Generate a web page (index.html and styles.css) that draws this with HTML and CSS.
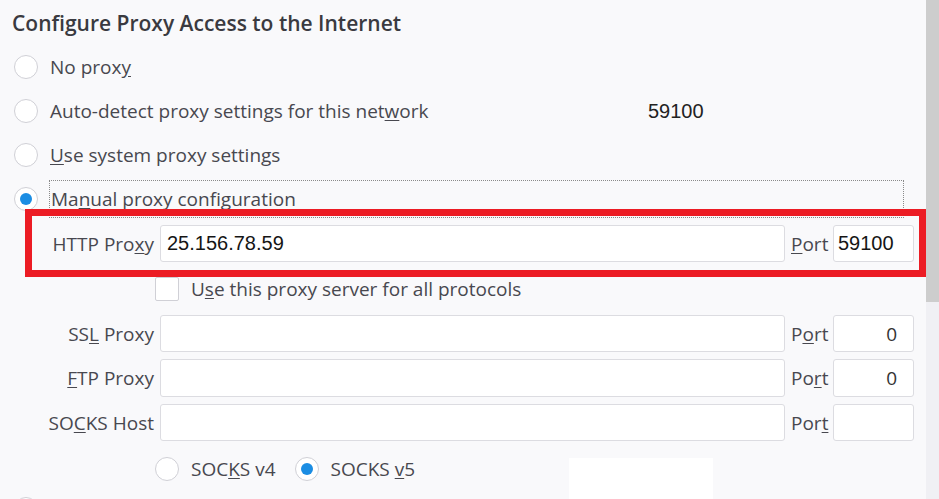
FILE: index.html
```html
<!DOCTYPE html>
<html lang="en">
<head>
<meta charset="utf-8">
<title>Connection Settings</title>
<link rel="stylesheet" href="styles.css">
</head>
<body>
<div class="window">
  <main class="pane">
    <h1 class="title">Configure Proxy Access to the Internet</h1>
    <div class="opt"><span class="radio"></span><span>No prox<u>y</u></span></div>
    <div class="opt"><span class="radio"></span><span class="wide">Auto-detect proxy settings for this net<u>w</u>ork</span><span class="stray">59100</span></div>
    <div class="opt"><span class="radio"></span><span><u>U</u>se system proxy settings</span></div>
    <div class="opt"><span class="radio on"></span><span class="focus">Ma<u>n</u>ual proxy configuration</span></div>

    <div class="proxy-grid">
      <span class="lbl">HTTP Pro<u>x</u>y</span>
      <div class="field host">25.156.78.59</div>
      <span class="plbl"><u>P</u>ort</span>
      <div class="field port typed">59100</div>

      <div class="check-row"><span class="checkbox"></span><span>U<u>s</u>e this proxy server for all protocols</span></div>

      <span class="lbl">SS<u>L</u> Proxy</span>
      <div class="field"></div>
      <span class="plbl">P<u>o</u>rt</span>
      <div class="field port num">0</div>

      <span class="lbl"><u>F</u>TP Proxy</span>
      <div class="field"></div>
      <span class="plbl">Po<u>r</u>t</span>
      <div class="field port num">0</div>

      <span class="lbl">SO<u>C</u>KS Host</span>
      <div class="field"></div>
      <span class="plbl">Por<u>t</u></span>
      <div class="field port num"></div>
    </div>

    <div class="socks-row">
      <div class="choice"><span class="radio"></span><span>SOC<u>K</u>S v4</span></div>
      <div class="choice"><span class="radio on"></span><span>SOCKS <u>v</u>5</span></div>
    </div>
    <div class="opt cut"><span class="radio"></span></div>
  </main>
  <div class="scrollbar"><div class="thumb"></div></div>
  <div class="annot-box"></div>
  <div class="patch"></div>
</div>
</body>
</html>
```

FILE: styles.css
```css
html, body {
  margin: 0;
  padding: 0;
}
body {
  background: #f9f9fb;
  font-family: "Open Sans", "Noto Sans", sans-serif;
  color: #48484f;
  overflow: hidden;
}
u {
  text-decoration: underline;
  text-underline-offset: 2px;
}
.window {
  position: relative;
  display: flex;
  width: 939px;
  height: 499px;
  overflow: hidden;
}
.pane {
  flex: 1;
  min-width: 0;
}
.scrollbar {
  width: 13px;
  flex: none;
  background: #f0f0f4;
}
.thumb {
  height: 302px;
  background: #cdcdcd;
}
.title {
  margin: 0;
  height: 45px;
  display: flex;
  align-items: center;
  padding-left: 12px;
  font-size: 21px;
  font-weight: 600;
  color: #3a3a40;
}
.opt {
  height: 44px;
  display: flex;
  align-items: center;
  gap: 12px;
  padding-left: 14px;
  font-size: 19px;
  white-space: nowrap;
}
.opt.cut {
  margin-top: -4px;
}
.wide {
  width: 586px;
  flex: none;
}
.stray {
  font-family: "Liberation Sans", Arial, sans-serif;
  font-size: 20px;
  color: #222;
}
.radio {
  width: 24px;
  height: 24px;
  box-sizing: border-box;
  border: 1px solid #d0d0d6;
  border-radius: 50%;
  background: #fff;
  display: flex;
  align-items: center;
  justify-content: center;
  flex: none;
}
.radio.on::after {
  content: "";
  width: 12px;
  height: 12px;
  border-radius: 50%;
  background: #1b8de3;
}
.focus {
  flex: 1;
  height: 38px;
  margin-left: -1px;
  margin-right: 22px;
  border: 1px dotted #8a8a8a;
  box-sizing: border-box;
  display: flex;
  align-items: center;
  padding-left: 1px;
}
.proxy-grid {
  display: grid;
  grid-template-columns: 154px 625px 36px 81px;
  grid-template-rows: 37px 39px 37px 38px 37px;
  column-gap: 6px;
  row-gap: 7px;
  margin-top: 4px;
  font-size: 19px;
}
.lbl {
  align-self: center;
  text-align: right;
  white-space: nowrap;
}
.plbl {
  align-self: center;
  white-space: nowrap;
}
.field {
  background: #fff;
  border: 1px solid #dcdce1;
  border-radius: 3px;
  box-sizing: border-box;
  display: flex;
  align-items: center;
}
.host {
  padding-left: 6px;
  font-family: "Liberation Sans", Arial, sans-serif;
  font-size: 20px;
  color: #151515;
}
.port.typed {
  padding-left: 4px;
  font-family: "Liberation Sans", Arial, sans-serif;
  font-size: 20px;
  color: #151515;
}
.port.num {
  justify-content: flex-end;
  padding-right: 16px;
  color: #333;
}
.check-row {
  grid-column: 1 / -1;
  display: flex;
  align-items: center;
  gap: 12px;
  padding-left: 155px;
}
.checkbox {
  width: 24px;
  height: 24px;
  box-sizing: border-box;
  border: 1px solid #d0d0d6;
  border-radius: 2px;
  background: #fff;
  flex: none;
}
.socks-row {
  height: 44px;
  margin-top: 6px;
  display: flex;
  align-items: center;
  gap: 19px;
  padding-left: 155px;
  font-size: 19px;
}
.choice {
  display: flex;
  align-items: center;
  gap: 12px;
}
.annot-box {
  position: absolute;
  left: 25px;
  top: 209px;
  width: 901px;
  height: 68px;
  box-sizing: border-box;
  border: 7px solid #ec1c24;
}
.patch {
  position: absolute;
  left: 569px;
  top: 458px;
  width: 144px;
  height: 41px;
  background: #fff;
}
```
